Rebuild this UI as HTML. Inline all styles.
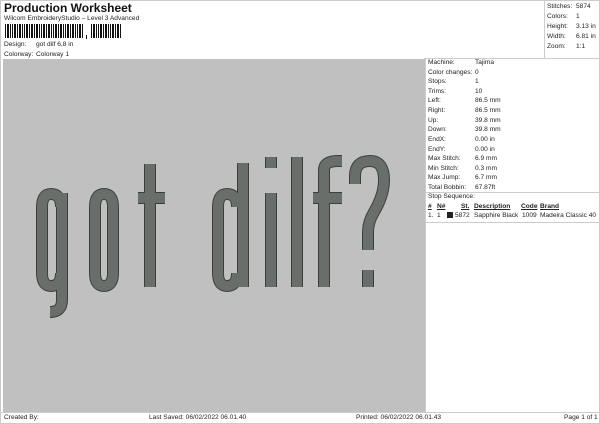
<!DOCTYPE html>
<html><head><meta charset="utf-8"><style>
*{margin:0;padding:0;box-sizing:border-box}
body{width:600px;height:424px;background:#fff;font-family:"Liberation Sans",sans-serif;color:#222;position:relative;overflow:hidden}
.a{position:absolute;font-size:6.6px;line-height:8px;white-space:nowrap}
</style></head><body>
<div style="position:absolute;left:0;top:0;width:600px;height:424px;border:1px solid #ccc"></div>
<div class="a" style="left:4px;top:1px;font-size:12px;line-height:14px;font-weight:bold;color:#111">Production Worksheet</div>
<div class="a" style="left:4px;top:15px">Wilcom EmbroideryStudio – Level 3 Advanced</div>
<svg style="position:absolute;left:5px;top:24px" width="120" height="16">
<g fill="#111">
<rect x="0" y="0" width="1" height="14"/><rect x="2" y="0" width="2" height="14"/><rect x="5" y="0" width="1" height="14"/><rect x="7" y="0" width="1" height="14"/><rect x="9" y="0" width="2" height="14"/><rect x="12" y="0" width="1" height="14"/><rect x="14" y="0" width="2" height="14"/><rect x="17" y="0" width="1" height="14"/><rect x="19" y="0" width="1" height="14"/><rect x="21" y="0" width="2" height="14"/><rect x="24" y="0" width="1" height="14"/><rect x="26" y="0" width="2" height="14"/><rect x="29" y="0" width="1" height="14"/><rect x="31" y="0" width="2" height="14"/><rect x="34" y="0" width="1" height="14"/><rect x="36" y="0" width="1" height="14"/><rect x="38" y="0" width="2" height="14"/><rect x="41" y="0" width="1" height="14"/><rect x="43" y="0" width="2" height="14"/><rect x="46" y="0" width="1" height="14"/><rect x="48" y="0" width="1" height="14"/><rect x="50" y="0" width="2" height="14"/><rect x="53" y="0" width="1" height="14"/><rect x="55" y="0" width="2" height="14"/><rect x="58" y="0" width="1" height="14"/><rect x="60" y="0" width="1" height="14"/><rect x="62" y="0" width="2" height="14"/><rect x="65" y="0" width="1" height="14"/><rect x="67" y="0" width="2" height="14"/><rect x="70" y="0" width="1" height="14"/><rect x="72" y="0" width="1" height="14"/><rect x="74" y="0" width="2" height="14"/><rect x="77" y="0" width="1" height="14"/>
<rect x="81" y="11" width="1" height="4"/>
<rect x="86" y="0" width="1" height="14"/><rect x="88" y="0" width="2" height="14"/><rect x="91" y="0" width="1" height="14"/><rect x="93" y="0" width="1" height="14"/><rect x="95" y="0" width="2" height="14"/><rect x="98" y="0" width="1" height="14"/><rect x="100" y="0" width="2" height="14"/><rect x="103" y="0" width="1" height="14"/><rect x="105" y="0" width="1" height="14"/><rect x="107" y="0" width="2" height="14"/><rect x="110" y="0" width="1" height="14"/><rect x="112" y="0" width="2" height="14"/><rect x="115" y="0" width="1" height="14"/>
</g></svg>
<div class="a" style="left:4px;top:41px">Design:</div><div class="a" style="left:36px;top:41px">got dilf 6,8 in</div>
<div class="a" style="left:4px;top:51px">Colorway:</div><div class="a" style="left:36px;top:51px">Colorway 1</div>

<div style="position:absolute;left:544px;top:0;width:1px;height:59px;background:#ccc"></div>
<div style="position:absolute;left:424px;top:58px;width:176px;height:1px;background:#ccc"></div>
<div class="a" style="left:547px;top:3px">Stitches:</div><div class="a" style="left:576px;top:3px">5874</div>
<div class="a" style="left:547px;top:13px">Colors:</div><div class="a" style="left:576px;top:13px">1</div>
<div class="a" style="left:547px;top:23px">Height:</div><div class="a" style="left:576px;top:23px">3.13 in</div>
<div class="a" style="left:547px;top:33px">Width:</div><div class="a" style="left:576px;top:33px">6.81 in</div>
<div class="a" style="left:547px;top:43px">Zoom:</div><div class="a" style="left:576px;top:43px">1:1</div>

<div style="position:absolute;left:3px;top:59px;width:422px;height:353px;background:#c0c0c0"></div>
<div style="position:absolute;left:425px;top:59px;width:1px;height:353px;background:#ccc"></div>
<div style="position:absolute;left:0;top:412px;width:600px;height:1px;background:#ccc"></div>

<svg style="position:absolute;left:0;top:0" width="600" height="424">
<defs><g id="L" fill="none" stroke-linecap="butt">
<path d="M61 207 Q61 194 51 194 Q42 194 42 207 L42 273 Q42 286 51 286 Q61 286 61 273 M62 193 L62 300 Q62 312 50 312"/>
<path d="M104 194 Q95 194 95 207 L95 273 Q95 286 104 286 Q113 286 113 273 L113 207 Q113 194 104 194Z"/>
<path d="M150 164 L150 287 M138 198 L165 198"/>
<path d="M237 207 Q237 194 227 194 Q218 194 218 207 L218 273 Q218 286 227 286 Q237 286 237 273 M243 163 L243 287"/>
<path d="M271 193 L271 287 M271 157 L271 168"/>
<path d="M297 157 L297 287"/>
<path d="M324 287 L324 170 Q324 161 338 161 L342 161 M313 198 L342 198"/>
<path d="M355 184 L355 176 Q355 161 370 161 Q384 161 384 180 Q384 195 374 212 Q368 222 368 232 L368 250 M368 270 L368 287"/>
</g></defs>
<use href="#L" stroke="#3c403c" stroke-width="12"/>
<use href="#L" stroke="#6a6e6a" stroke-width="10"/>
</svg>

<div class="a" style="left:428px;top:59px">Machine:</div><div class="a" style="left:475px;top:59px">Tajima</div>
<div class="a" style="left:428px;top:69px">Color changes:</div><div class="a" style="left:475px;top:69px">0</div>
<div class="a" style="left:428px;top:78px">Stops:</div><div class="a" style="left:475px;top:78px">1</div>
<div class="a" style="left:428px;top:88px">Trims:</div><div class="a" style="left:475px;top:88px">10</div>
<div class="a" style="left:428px;top:97px">Left:</div><div class="a" style="left:475px;top:97px">86.5 mm</div>
<div class="a" style="left:428px;top:107px">Right:</div><div class="a" style="left:475px;top:107px">86.5 mm</div>
<div class="a" style="left:428px;top:117px">Up:</div><div class="a" style="left:475px;top:117px">39.8 mm</div>
<div class="a" style="left:428px;top:126px">Down:</div><div class="a" style="left:475px;top:126px">39.8 mm</div>
<div class="a" style="left:428px;top:136px">EndX:</div><div class="a" style="left:475px;top:136px">0.00 in</div>
<div class="a" style="left:428px;top:146px">EndY:</div><div class="a" style="left:475px;top:146px">0.00 in</div>
<div class="a" style="left:428px;top:155px">Max Stitch:</div><div class="a" style="left:475px;top:155px">6.9 mm</div>
<div class="a" style="left:428px;top:165px">Min Stitch:</div><div class="a" style="left:475px;top:165px">0.3 mm</div>
<div class="a" style="left:428px;top:174px">Max Jump:</div><div class="a" style="left:475px;top:174px">6.7 mm</div>
<div class="a" style="left:428px;top:184px">Total Bobbin:</div><div class="a" style="left:475px;top:184px">67.87ft</div>
<div style="position:absolute;left:426px;top:192px;width:174px;height:1px;background:#ccc"></div>
<div class="a" style="left:428px;top:193px">Stop Sequence:</div>
<div class="a" style="left:428px;top:203px;font-weight:bold;text-decoration:underline">#</div>
<div class="a" style="left:437px;top:203px;font-weight:bold;text-decoration:underline">N#</div>
<div class="a" style="left:461px;top:203px;font-weight:bold;text-decoration:underline">St.</div>
<div class="a" style="left:474px;top:203px;font-weight:bold;text-decoration:underline">Description</div>
<div class="a" style="left:521px;top:203px;font-weight:bold;text-decoration:underline">Code</div>
<div class="a" style="left:540px;top:203px;font-weight:bold;text-decoration:underline">Brand</div>
<div class="a" style="left:428px;top:212px">1.</div><div class="a" style="left:437px;top:212px">1</div>
<div style="position:absolute;left:447px;top:212px;width:6px;height:6px;background:#222"></div>
<div class="a" style="left:455px;top:212px">5872</div>
<div class="a" style="left:474px;top:212px">Sapphire Black</div>
<div class="a" style="left:522px;top:212px">1009</div>
<div class="a" style="left:540px;top:212px">Madeira Classic 40</div>
<div style="position:absolute;left:426px;top:222px;width:174px;height:1px;background:#ccc"></div>

<div class="a" style="left:4px;top:414px">Created By:</div>
<div class="a" style="left:149px;top:414px">Last Saved: 06/02/2022 06.01.40</div>
<div class="a" style="left:356px;top:414px">Printed: 06/02/2022 06.01.43</div>
<div class="a" style="left:564px;top:414px">Page 1 of 1</div>
</body></html>
